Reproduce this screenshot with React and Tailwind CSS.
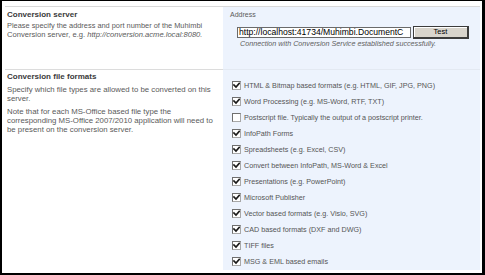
import React from "react";

const items = [
  ["HTML & Bitmap based formats (e.g. HTML, GIF, JPG, PNG)", true],
  ["Word Processing (e.g. MS-Word, RTF, TXT)", true],
  ["Postscript file. Typically the output of a postscript printer.", false],
  ["InfoPath Forms", true],
  ["Spreadsheets (e.g. Excel, CSV)", true],
  ["Convert between InfoPath, MS-Word & Excel", true],
  ["Presentations (e.g. PowerPoint)", true],
  ["Microsoft Publisher", true],
  ["Vector based formats (e.g. Visio, SVG)", true],
  ["CAD based formats (DXF and DWG)", true],
  ["TIFF files", true],
  ["MSG & EML based emails", true],
];

function Check({ checked }) {
  return (
    <div className="w-[9px] h-[9px] shrink-0 border border-t-[#6f6f6f] border-l-[#6f6f6f] border-r-[#a8a8a8] border-b-[#a8a8a8] bg-white flex items-center justify-center">
      {checked && (
        <svg width="7" height="7" viewBox="0 0 7 7">
          <path d="M1 3 L3 5 L6.2 1.4" fill="none" stroke="#1a1a1a" strokeWidth="1.7" strokeLinecap="square" />
        </svg>
      )}
    </div>
  );
}

export default function App() {
  return (
    <div
      className="w-[485px] h-[275px] bg-white border-t border-l-2 border-r-[3px] border-b-2 border-black pt-[5px] pl-[3px] pr-[2px] pb-[3px] flex flex-col"
      style={{ fontFamily: '"Liberation Sans", Arial, sans-serif' }}
    >
      <div className="border-t border-[#d9d9d9] flex flex-col flex-1">
        {/* Section 1 */}
        <div className="flex h-[62px]">
          <div className="w-[218px] pl-[2px] pt-[3px]">
            <div className="text-[8px] leading-[10px] font-bold text-[#3a3a3a]">Conversion server</div>
            <div className="mt-[1px] text-[#5a5a5a] whitespace-nowrap">
              <div className="text-[7.4px] leading-[9px]">
                Please specify the address and port number of the Muhimbi
              </div>
              <div className="text-[7.6px] leading-[9px]">
                Conversion server, e.g. <span className="italic">http://conversion.acme.local:8080.</span>
              </div>
            </div>
          </div>
          <div className="flex-1 bg-[#edf3fd] pl-[7px] pt-[3px]">
            <div className="text-[7px] leading-[10px] text-[#5a5a5a]">Address</div>
            <div className="mt-[6px] ml-[7px] flex items-center gap-[2px] h-[12px]">
              <div className="w-[174px] h-[11px] bg-white border border-[#6a6a6a] overflow-hidden whitespace-nowrap text-[8.6px] leading-[9px] text-black pl-[1px]">
                http://localhost:41734/Muhimbi.DocumentC
              </div>
              <div className="w-[56px] h-[13px] bg-[#d8d4cc] border border-[#3c3c3c] border-r-2 border-b-2 shadow-[inset_1px_1px_0_#ffffff] flex items-center justify-center text-[7.5px] leading-[9px] text-black">
                Test
              </div>
            </div>
            <div className="mt-[1px] ml-[10px] text-[7.2px] leading-[9px] italic text-[#5f5f5f]">
              Connection with Conversion Service established successfully.
            </div>
          </div>
        </div>
        {/* Section 2 */}
        <div className="flex flex-1">
          <div className="w-[218px] pl-[2px] pt-[2px] border-t border-[#dcdcdc]">
            <div className="text-[8px] leading-[10px] font-bold text-[#3a3a3a]">Conversion file formats</div>
            <div className="w-[209px] mt-[3px] text-[7.8px] leading-[9px] text-[#5a5a5a]">
              Specify which file types are allowed to be converted on this server.
            </div>
            <div className="w-[209px] mt-[4px] text-[7.8px] leading-[9px] text-[#5a5a5a]">
              Note that for each MS-Office based file type the corresponding MS-Office 2007/2010 application will need to be present on the conversion server.
            </div>
          </div>
          <div className="flex-1 bg-[#edf3fd] border-t border-[#e3e9f2] pl-[9px] pt-[7px] flex flex-col">
            {items.map(([label, checked]) => (
              <div key={label} className="h-[16px] flex items-center gap-[3px]">
                <Check checked={checked} />
                <span className="text-[7.2px] leading-[9px] text-[#555555] whitespace-nowrap">{label}</span>
              </div>
            ))}
          </div>
        </div>
      </div>
    </div>
  );
}
